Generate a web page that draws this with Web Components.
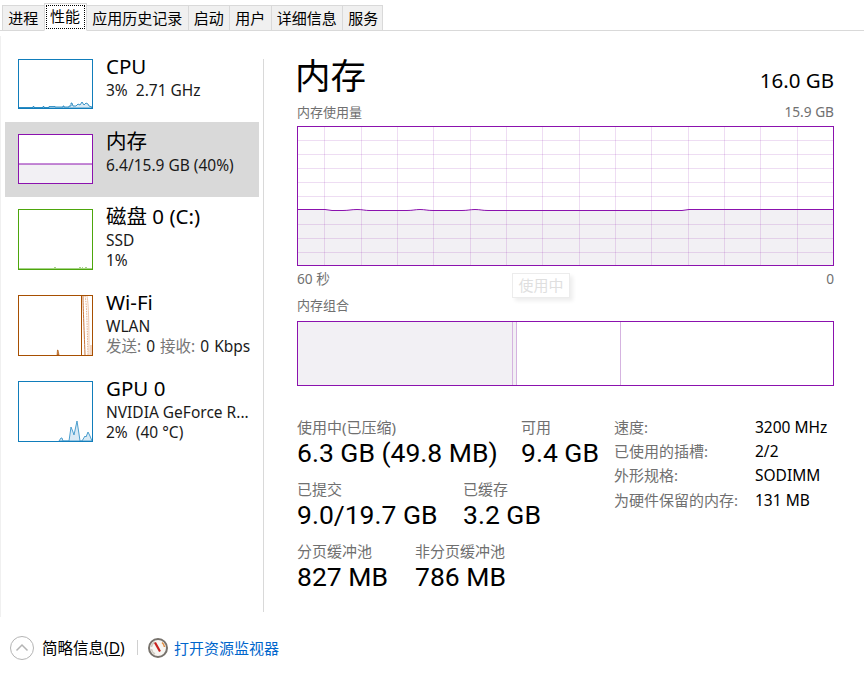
<!DOCTYPE html>
<html lang="zh-CN">
<head>
<meta charset="utf-8">
<title>任务管理器</title>
<style>
  html, body { margin: 0; height: 100%; background: #fff; }
  body { font-family: "Noto Sans", "Noto Sans CJK SC", sans-serif; color: #000; overflow: hidden; }
  task-manager svg { display: block; }
</style>
</head>
<body>
<task-manager>
  <tab-bar slot="tabs">
    <tab-item>进程</tab-item>
    <tab-item selected>性能</tab-item>
    <tab-item>应用历史记录</tab-item>
    <tab-item>启动</tab-item>
    <tab-item>用户</tab-item>
    <tab-item>详细信息</tab-item>
    <tab-item>服务</tab-item>
  </tab-bar>

  <perf-side slot="side">
    <perf-item name="CPU" color="#117dbb">
      <svg slot="thumb" width="73" height="48" viewBox="0 0 73 48">
        <path d="M0 48V47.5H14V46.5H15V47.5H24V46.5H25V47.5H30V46.5H36V47H44V46H45V47H50V46H52V43H53L54 46H57L59 44L61 45L63 42L65 45L67 43L69 44L70 46L73 47V48Z" fill="#d9eaf5" stroke="#117dbb" stroke-width=".8"/>
      </svg>
      <div>3%&nbsp; 2.71 GHz</div>
    </perf-item>
    <perf-item name="内存" color="#8b12ae" selected>
      <svg slot="thumb" width="73" height="48" viewBox="0 0 73 48">
        <rect y="29" width="73" height="19" fill="#f2f0f4"/>
        <path d="M0 29H73" stroke="#8b12ae"/>
      </svg>
      <div>6.4/15.9 GB (40%)</div>
    </perf-item>
    <perf-item name="磁盘 0 (C:)" color="#4da60c" tall>
      <svg slot="thumb" width="73" height="59" viewBox="0 0 73 59">
        <path d="M35 57.5H37M60 57.5H62M63 57.5H64M66 57.5H68M0 58.5H73" stroke="#a6d388"/>
      </svg>
      <div>SSD</div>
      <div>1%</div>
    </perf-item>
    <perf-item name="Wi-Fi" color="#a74f01" tall>
      <svg slot="thumb" width="73" height="59" viewBox="0 0 73 59">
        <path d="M62.5 0V59" stroke="#a74f01"/>
        <path d="M38 59L38.500 54H39L40 59Z" fill="#c98a50" stroke="#a74f01" stroke-width=".6"/>
        <path d="M64 0C64 10 65 30 66 59" fill="none" stroke="#c8743a"/>
        <path d="M66 0C68 8 68 30 69 59" fill="none" stroke="#e3ad88" stroke-dasharray="1.500 1"/>
        <path d="M68 0C70 10 70 40 70 59" fill="none" stroke="#f0c8ac"/>
        <path d="M72 49V59" stroke="#e3ad88"/>
      </svg>
      <div>WLAN</div>
      <div style="word-spacing:1px"><span style="color:#767676">发送:</span> 0 <span style="color:#767676">接收:</span> 0 Kbps</div>
    </perf-item>
    <perf-item name="GPU 0" color="#117dbb" tall>
      <svg slot="thumb" width="73" height="59" viewBox="0 0 73 59">
        <path d="M40 59L42 56H43L44 59H50L52 45L54 50L55 53L58 39L60 52L61 59H63L66 54L67 55L69 50L71 54L73 59Z" fill="#d9eaf5" stroke="#4d9fce" stroke-width="1"/>
      </svg>
      <div>NVIDIA GeForce R...</div>
      <div>2%&nbsp; (40 °C)</div>
    </perf-item>
  </perf-side>

  <mem-panel slot="main">
    <mem-graph></mem-graph>
    <mem-bar></mem-bar>
    <mem-stats></mem-stats>
  </mem-panel>

  <foot-bar slot="foot"></foot-bar>
</task-manager>

<script>
const tplTask = document.createElement('template');
tplTask.innerHTML = `
  <style>
    :host { display: flex; flex-direction: column; height: 678px; }
    .body { display: flex; height: 586px; margin-top: 5px; border-left: 1px solid #f0f0f0; }
    .foot { flex: 1; }
  </style>
  <slot name="tabs"></slot>
  <div class="body">
    <slot name="side"></slot>
    <slot name="main"></slot>
  </div>
  <div class="foot"><slot name="foot"></slot></div>
`;
class TaskManager extends HTMLElement {
  constructor() {
    super();
    this.attachShadow({ mode: 'open' }).appendChild(tplTask.content.cloneNode(true));
  }
}
customElements.define('task-manager', TaskManager);

class TabBar extends HTMLElement {
  constructor() {
    super();
    this.attachShadow({ mode: 'open' }).innerHTML = `
      <style>
        :host { display: flex; align-items: flex-end; height: 31px; padding-left: 2px; box-sizing: border-box; border-bottom: 1px solid #d9d9d9; }
      </style>
      <slot></slot>`;
  }
}
customElements.define('tab-bar', TabBar);

class TabItem extends HTMLElement {
  constructor() {
    super();
    this.attachShadow({ mode: 'open' }).innerHTML = `
      <style>
        :host { display: block; box-sizing: border-box; height: 26px; margin-bottom: -1px; margin-left: -1px; padding: 0 5.250px; background: #f0f0f0; border: 1px solid #d9d9d9; font-size: 15px; line-height: 25px; white-space: nowrap; }
        :host(:first-child) { margin-left: 0; }
        :host(:last-child) { padding-right: 4px; }
        :host([selected]) { height: 28px; background: #fff; border-bottom-color: #fff; position: relative; z-index: 1; padding: 0; line-height: 22px; }
        .focus { display: block; margin: 1px; padding: 0 5px 0 4.500px; height: 24px; outline: 1px dotted #000; outline-offset: -1px; }
        :host(:not([selected])) .focus { display: contents; }
      </style>
      <span class="focus"><slot></slot></span>`;
  }
}
customElements.define('tab-item', TabItem);

class PerfSide extends HTMLElement {
  constructor() {
    super();
    this.attachShadow({ mode: 'open' }).innerHTML = `
      <style>
        :host { display: block; box-sizing: border-box; width: 262px; height: 576px; padding: 11px 4px 0 4px; }
      </style>
      <slot></slot>`;
  }
}
customElements.define('perf-side', PerfSide);

class PerfItem extends HTMLElement {
  constructor() {
    super();
    const color = this.getAttribute('color');
    this.attachShadow({ mode: 'open' }).innerHTML = `
      <style>
        :host { display: flex; gap: 13px; box-sizing: border-box; height: 75px; padding: 12px 0 0 13px; color: #1a1a1a; }
        :host([tall]) { height: 86px; }
        :host([selected]) { background: #d9d9d9; }
        .thumb { flex: none; box-sizing: border-box; width: 75px; height: 50px; border: 1px solid ${color}; background: #fff; overflow: hidden; }
        :host([tall]) .thumb { height: 61px; }
        .name { font-size: 20.500px; line-height: 22px; margin: -4px 0 3px; color: #000; white-space: nowrap; }
        .lines { font-size: 15.500px; line-height: 20px; white-space: nowrap; }
      </style>
      <div class="thumb"><slot name="thumb"></slot></div>
      <div>
        <div class="name">${this.getAttribute('name')}</div>
        <div class="lines"><slot></slot></div>
      </div>`;
  }
}
customElements.define('perf-item', PerfItem);

class MemPanel extends HTMLElement {
  constructor() {
    super();
    this.attachShadow({ mode: 'open' }).innerHTML = `
      <style>
        :host { display: block; box-sizing: border-box; width: 600px; height: 553px; margin-top: 23px; padding: 0 0 0 33px; border-left: 1px solid #d9d9d9; position: relative; }
        header { display: flex; justify-content: space-between; align-items: flex-start; width: 537px; height: 45px; }
        h1 { margin: -9px 0 0 -2px; font-size: 35.500px; font-weight: 400; line-height: 50px; }
        .total { font-size: 20.500px; line-height: 27px; margin-top: 8px; }
      </style>
      <header><h1>内存</h1><div class="total">16.0 GB</div></header>
      <slot></slot>`;
  }
}
customElements.define('mem-panel', MemPanel);

class MemGraph extends HTMLElement {
  constructor() {
    super();
    const xs = [27, 64, 100, 136, 173, 209, 245, 282, 318, 354, 391, 427, 463, 500];
    const ys = [14, 28, 42, 56, 70, 98, 112, 126];
    const v = xs.map(x => `M${x}.5 0V139`).join('');
    const h = ys.map(y => `M0 ${y}.5H537`).join('');
    const line = 'M0 83.5H28L35 84.5H46C52 84.5 54 83.500 60 83.500C66 83.500 68 84.5 72 84.5H110C116 84.5 118 83.500 123 83.500C128 83.500 130 84.5 136 84.5H165C171 84.5 173 83.500 178 83.500C183 83.500 185 84.5 191 84.5H385L392 83.5H537';
    this.attachShadow({ mode: 'open' }).innerHTML = `
      <style>
        :host { display: block; width: 537px; color: #707070; font-size: 13px; line-height: 18px; }
        .row { display: flex; justify-content: space-between; }
        .top { margin-top: -1px; }
        .n { font-size: 13.700px; }
        svg { display: block; margin: 5px 0 4px; }
      </style>
      <div class="row top"><span>内存使用量</span><span class="n">15.9 GB</span></div>
      <svg width="537" height="140" viewBox="0 0 537 140">
        <path d="${line}V140H0Z" fill="#f2f0f4"/>
        <path d="${v}${h}" stroke="#8b12ae" stroke-opacity=".145" fill="none"/>
        <path d="${line}" fill="none" stroke="#8b12ae" stroke-width="1"/>
        <rect x=".5" y=".5" width="536" height="139" fill="none" stroke="#8b12ae"/>
      </svg>
      <div class="row"><span class="n">60 秒</span><span class="n">0</span></div>`;
  }
}
customElements.define('mem-graph', MemGraph);

class MemBar extends HTMLElement {
  constructor() {
    super();
    this.attachShadow({ mode: 'open' }).innerHTML = `
      <style>
        :host { display: block; width: 537px; position: relative; margin-top: 8px; color: #707070; font-size: 13px; line-height: 18px; }
        .bar { display: flex; box-sizing: border-box; height: 65px; margin-top: 7px; border: 1px solid #8b12ae; }
        .bar div { box-sizing: border-box; }
        .used { width: 215px; background: #f2f0f4; border-right: 1px solid #d5b3e0; }
        .mod { width: 4px; background: #f2f0f4; border-right: 1px solid #d5b3e0; }
        .stand { width: 104px; border-right: 1px solid #d5b3e0; }
        .tip { position: absolute; left: 215px; top: -23px; box-sizing: border-box; width: 58px; height: 25px; border: 1px solid #ececec; background: #fff; color: #dfdfdf; font-size: 15px; line-height: 23px; text-align: center; box-shadow: 3px 3px 4px rgba(0,0,0,.07); }
      </style>
      <span>内存组合</span>
      <div class="bar"><div class="used"></div><div class="mod"></div><div class="stand"></div></div>
      <div class="tip">使用中</div>`;
  }
}
customElements.define('mem-bar', MemBar);

class StatBlock extends HTMLElement {
  constructor() {
    super();
    this.attachShadow({ mode: 'open' }).innerHTML = `
      <style>
        :host { display: block; width: ${this.getAttribute('w')}px; white-space: nowrap; }
        .k { color: #707070; font-size: 15px; line-height: 18px; }
        .v { font-family: Roboto, "Noto Sans", sans-serif; font-size: 26.500px; line-height: 33px; }
      </style>
      <div class="k">${this.getAttribute('k')}</div>
      <div class="v">${this.getAttribute('v')}</div>`;
  }
}
customElements.define('stat-block', StatBlock);

class MemStats extends HTMLElement {
  constructor() {
    super();
    const specs = [['速度:', '3200 MHz'], ['已使用的插槽:', '2/2'], ['外形规格:', 'SODIMM'], ['为硬件保留的内存:', '131 MB']];
    this.attachShadow({ mode: 'open' }).innerHTML = `
      <style>
        :host { display: flex; margin-top: 32px; }
        .left { width: 317px; display: flex; flex-direction: column; gap: 11px; }
        .row { display: flex; }
        .specs { display: grid; grid-template-columns: 141px auto; grid-auto-rows: 24.300px; margin-top: -3px; align-self: flex-start; line-height: 24px; }
        .specs span:nth-child(odd) { color: #707070; font-size: 15px; }
        .specs span:nth-child(even) { font-size: 15.500px; }
      </style>
      <div class="left">
        <div class="row"><stat-block w="224" k="使用中(已压缩)" v="6.3 GB (49.8 MB)"></stat-block><stat-block w="93" k="可用" v="9.4 GB"></stat-block></div>
        <div class="row"><stat-block w="166" k="已提交" v="9.0/19.7 GB"></stat-block><stat-block w="151" k="已缓存" v="3.2 GB"></stat-block></div>
        <div class="row"><stat-block w="118" k="分页缓冲池" v="827 MB"></stat-block><stat-block w="199" k="非分页缓冲池" v="786 MB"></stat-block></div>
      </div>
      <div class="specs">${specs.map(([k, v]) => `<span>${k}</span><span>${v}</span>`).join('')}</div>`;
  }
}
customElements.define('mem-stats', MemStats);

class FootBar extends HTMLElement {
  constructor() {
    super();
    this.attachShadow({ mode: 'open' }).innerHTML = `
      <style>
        :host { display: flex; align-items: center; height: 61px; padding-left: 10px; box-sizing: border-box; }
        u { text-decoration: underline; }
        .fewer { margin-left: 8px; width: 85px; color: #000; font-size: 15.500px; white-space: nowrap; }
        .sep { width: 1px; height: 15px; margin: 0 10px; background: #d0d0d0; }
        a { margin-left: 6px; color: #0066cc; font-size: 15px; text-decoration: none; }
        svg { display: block; flex: none; }
      </style>
      <svg width="24" height="24" viewBox="0 0 24 24">
        <circle cx="12" cy="12" r="11.500" fill="#fff" stroke="#b4b4b4"/>
        <path d="M6.500 14.500L12 9L17.500 14.500" fill="none" stroke="#b4b4b4" stroke-width="1.500"/>
      </svg>
      <span class="fewer">简略信息(<u>D</u>)</span>
      <span class="sep"></span>
      <svg width="20" height="20" viewBox="0 0 20 20">
        <circle cx="10" cy="10" r="9" fill="#f7f5f1" stroke="#77726c" stroke-width="2"/>
        <path d="M3.500 9A6.500 6.500 0 0 1 7 4" fill="none" stroke="#cfc9bf" stroke-width="1.500"/>
        <path d="M3.500 11A6.500 6.500 0 0 0 7 16" fill="none" stroke="#cfc9bf" stroke-width="1.500"/>
        <path d="M14 4.500A7 7 0 0 1 16.500 9" fill="none" stroke="#e08a3c" stroke-width="1.500"/>
        <path d="M7 4.500L12 13.500" stroke="#c8201c" stroke-width="2.200"/>
      </svg>
      <a href="#">打开资源监视器</a>`;
  }
}
customElements.define('foot-bar', FootBar);
</script>
</body>
</html>
